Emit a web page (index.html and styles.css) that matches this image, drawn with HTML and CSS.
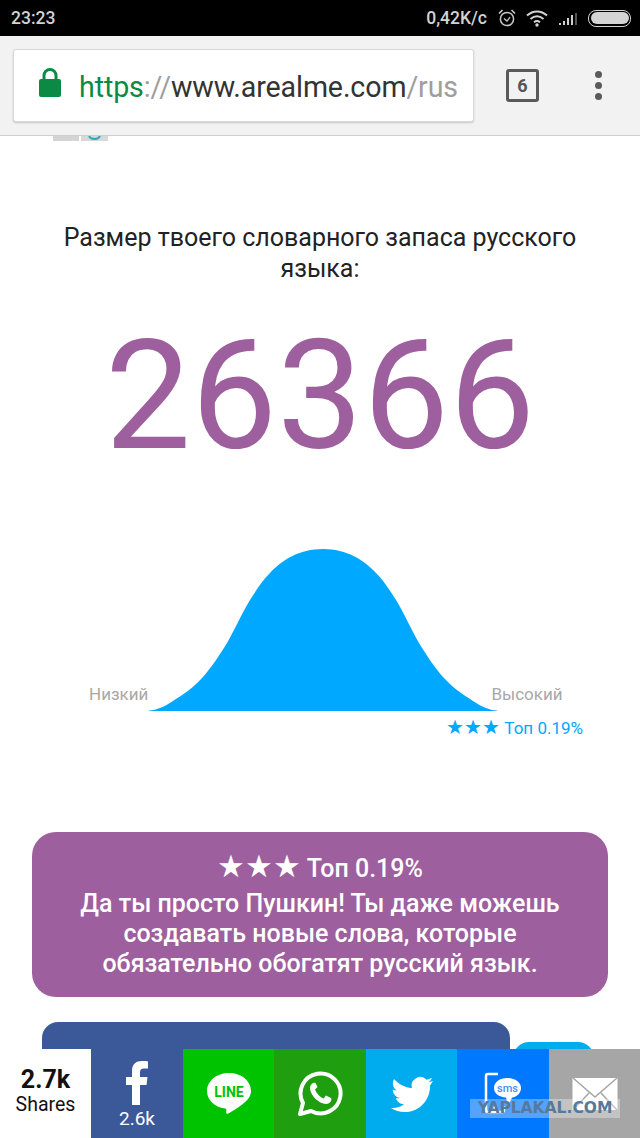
FILE: index.html
```html
<!DOCTYPE html>
<html lang="ru">
<head>
<meta charset="utf-8">
<title>Словарный запас</title>
<link rel="stylesheet" href="styles.css">
</head>
<body>
<div class="page">
  <header class="status">
    <span class="time">23:23</span>
    <div class="status-right">
      <span class="speed">0,42K/c</span>
      <svg class="ic-alarm" width="20" height="20" viewBox="0 0 20 20"><circle cx="10" cy="11" r="6.6" fill="none" stroke="#c9c9c9" stroke-width="1.5"/><path d="M7 10.5l3 2.6 3-4" fill="none" stroke="#c9c9c9" stroke-width="1.3"/><path d="M2 5.5L5.5 2M18 5.5L14.5 2" stroke="#c9c9c9" stroke-width="1.7"/></svg>
      <svg class="ic-wifi" width="24" height="18" viewBox="0 0 24 18"><path d="M2 6.5C8 1 16 1 22 6.5M5.5 10c4-3.400 9-3.400 13 0M9 13.200c2-1.500 4-1.500 6 0" fill="none" stroke="#d4d4d4" stroke-width="2"/><circle cx="12" cy="16" r="1.700" fill="#d4d4d4"/></svg>
      <svg class="ic-signal" width="20" height="14" viewBox="0 0 20 14"><path d="M1 11h2v2H1zM5 9h2v4H5zM9 6h2v7H9zM13 3h2v10h-2z" fill="#cfcfcf"/><path d="M17 1h2v12h-2z" fill="#555"/></svg>
      <div class="battery"><div class="battery-fill"></div></div>
    </div>
  </header>

  <div class="toolbar">
    <div class="urlbox">
      <svg class="lock" width="22" height="30" viewBox="0 0 22 30"><rect x="0" y="11" width="22" height="18" rx="2" fill="#0b8a43"/><path d="M5 12V7.500a6 6 0 0 1 12 0V12" fill="none" stroke="#0b8a43" stroke-width="3"/></svg>
      <span class="url"><span class="u-green">https</span><span class="u-gray">://</span><span class="u-dark">www.arealme.com</span><span class="u-gray">/rus</span></span>
    </div>
    <div class="tabs">6</div>
    <div class="dots"><i></i><i></i><i></i></div>
  </div>

  <main class="content">
    <div class="thumbs">
      <span class="thumb"></span>
      <svg class="thumb-teal" width="27" height="5" viewBox="0 0 27 5"><rect width="27" height="5" fill="#d8d8d8"/><path d="M8 0c1.500 4 9.500 4 11 0" fill="none" stroke="#2fa6b5" stroke-width="2"/></svg>
    </div>
    <h1 class="title">Размер твоего словарного запаса русского языка:</h1>
    <div class="score">26366</div>
    <div class="chart">
      <span class="lbl">Низкий</span>
      <svg class="curve" width="348" height="163" viewBox="0 0 348 163"><path d="M0 161.500C8 161 15 158 24 152C35 145 45 138 54 128C64 116 70 107 78 94C86 80 92 66 101 51C108 40 113 32 121 24C133 11 150 0 174 0C198 0 215 11 227 24C235 32 240 40 247 51C256 66 262 80 270 94C278 107 284 116 294 128C303 138 313 145 324 152C333 158 340 161 348 161.500L348 162L0 162Z" fill="#00a8ff"/></svg>
      <span class="lbl lbl-high">Высокий</span>
    </div>
    <div class="rank"><span class="rank-stars">★★★</span> Топ 0.19%</div>
    <section class="card">
      <div class="card-top"><span class="card-stars">★★★</span> Топ 0.19%</div>
      <div>Да ты просто Пушкин! Ты даже можешь создавать новые слова, которые обязательно обогатят русский язык.</div>
    </section>
    <div class="buttons">
      <div class="btn-fb"></div>
      <div class="btn-tw"></div>
    </div>
  </main>

  <footer class="sharebar">
    <div class="total"><b>2.7k</b><span>Shares</span></div>
    <div class="sh sh-fb">
      <svg width="24" height="44" viewBox="0 0 24 44"><path d="M7 44V24H1v-8h6v-6C7 3 11 0 17 0c3 0 5 .2 6 .4v7h-4c-3 0-4 1.400-4 4V16h7.500l-1 8H15v20z" fill="#fff"/></svg>
      <span class="sh-count">2.6k</span>
    </div>
    <div class="sh sh-line">
      <svg width="46" height="44" viewBox="0 0 46 44"><path d="M23 1C10.500 1 1 9 1 19c0 9 7.500 16 18 17.500 1.500.3 1.500 1 1.200 3-.2 1.500 0 3 2 2 3-1.500 14-8 19-13.500C44 25 45 22 45 19 45 9 35.500 1 23 1z" fill="#fff"/><text x="23" y="25" class="line-txt">LINE</text></svg>
    </div>
    <div class="sh sh-wa">
      <svg width="46" height="46" viewBox="0 0 46 46"><path d="M3 43l3-11A20 20 0 1 1 14 40z" fill="none" stroke="#fff" stroke-width="4" stroke-linejoin="round"/><path d="M16 12c-2 1-3 3-3 5 0 7 9 16 16 16 2 0 4-1 5-3 .6-1.500 .5-2.500 0-3l-5-2.500-2.500 3c-3-1-7-5-8.500-9l2.500-2.500L18.500 12c-.5-.5-1.500-.5-2.500 0z" fill="#fff"/></svg>
    </div>
    <div class="sh sh-tw">
      <svg width="44" height="36" viewBox="0 0 44 36"><path d="M43 5c-1.600.7-3 1.100-4.800 1.300 1.700-1 3-2.600 3.600-4.600-1.600 1-3.400 1.600-5.300 2A8.600 8.600 0 0 0 22 12c-7.200-.4-13.600-3.800-18-9-2.200 4-1.200 8.700 2.600 11.500-1.400 0-2.700-.4-3.800-1 0 4.200 3 7.700 7 8.500-1.300.4-2.600.4-3.900.2 1.100 3.400 4.300 5.900 8 6C10.500 31 6 32.400 1 32c4 2.600 8.700 4 13.700 4 16.500 0 25.800-14 25.300-26.500C41 8 42.200 6.700 43 5z" fill="#fff"/></svg>
    </div>
    <div class="sh sh-sms">
      <svg width="38" height="44" viewBox="0 0 38 44"><path d="M14 2H4a2 2 0 0 0-2 2v34a2 2 0 0 0 2 2h14a2 2 0 0 0 2-2v-4" fill="none" stroke="#fff" stroke-width="2.500"/><circle cx="11" cy="36" r="1.700" fill="#fff"/><path d="M23 6c8 0 14 4 14 10 0 5-4 9-9 9.500L24 34l-2-8.500C15 25 10 21.500 10 16c0-6 6-10 13-10z" fill="#fff"/><text x="23.500" y="20" class="sms-txt">sms</text></svg>
    </div>
    <div class="sh sh-mail">
      <svg width="46" height="34" viewBox="0 0 46 34"><rect width="45" height="32" x="0.500" y="1" fill="#fff"/><path d="M1 1l22 19L45 1M1 33l16-17M45 33L29 16" fill="none" stroke="#a6a6a6" stroke-width="1.500"/></svg>
    </div>
  </footer>
  <div class="watermark">YAPLAKAL.COM</div>
</div>
</body>
</html>
```

FILE: styles.css
```css
* { box-sizing: border-box; }
html, body { margin: 0; padding: 0; }
body { background: #fff; font-family: Roboto, "Liberation Sans", sans-serif; }
.page { position: relative; width: 640px; height: 1138px; overflow: hidden; display: flex; flex-direction: column; background: #fff; }

.status { height: 36px; flex: none; background: #000; display: flex; align-items: center; justify-content: space-between; padding: 0 9px 0 11px; color: #d2d2d2; font-size: 17.500px; font-weight: 500; }
.status-right { display: flex; align-items: center; }
.speed { margin-right: 10px; }
.ic-alarm { margin-right: 8px; margin-top: -1px; }
.ic-wifi { margin-right: 9px; }
.ic-signal { margin-right: 10px; margin-top: 2px; }
.battery { width: 43px; height: 17px; border: 1.500px solid #d4d4d4; border-radius: 8px; padding: 1.500px; }
.battery-fill { height: 100%; background: #d4d4d4; border-radius: 6px; }

.toolbar { height: 100px; flex: none; background: #f2f2f2; border-bottom: 1px solid #cfcfcf; display: flex; align-items: center; padding: 0 0 0 13px; }
.urlbox { width: 461px; height: 73px; margin-top: -1px; background: #fff; border: 1px solid #d8d8d8; border-radius: 3px; box-shadow: 0 1px 2px rgba(0,0,0,.18); display: flex; align-items: center; padding-left: 25px; }
.lock { flex: none; margin-right: 18px; margin-top: -4px; }
.url { font-size: 28.600px; white-space: nowrap; letter-spacing: -.1px; padding-top: 3px; }
.u-green { color: #0b8a43; }
.u-gray { color: #9e9e9e; }
.u-dark { color: #333; }
.tabs { width: 33px; height: 33px; margin-left: 32px; margin-top: -1px; border: 3px solid #5a5a5a; border-radius: 3px; color: #555; font-size: 18px; font-weight: 700; display: flex; align-items: center; justify-content: center; }
.dots { margin-left: 56px; display: flex; flex-direction: column; gap: 4px; margin-top: -1px; }
.dots i { display: block; width: 7px; height: 7px; border-radius: 50%; background: #5a5a5a; }

.content { flex: 1; min-height: 0; display: flex; flex-direction: column; align-items: center; }
.thumbs { align-self: flex-start; display: flex; gap: 2px; margin-left: 53px; height: 5px; }
.thumb { width: 26px; height: 5px; background: #d4d4d4; }
.thumb-teal { display: block; }
.title { margin: 81px 0 0; width: 540px; font-size: 25px; font-weight: 400; line-height: 31px; text-align: center; color: #222; }
.score { margin-top: 24px; font-size: 153px; font-weight: 400; line-height: 176px; color: #9e5f9e; text-align: center; }
.chart { margin-top: 65px; align-self: flex-start; margin-left: 89px; display: flex; align-items: flex-end; gap: 1px; }
.lbl { flex: none; color: #a8a8a8; font-size: 17px; line-height: 20px; margin-bottom: 8px; }
.lbl-high { margin-left: -7px; }
.curve { display: block; flex: none; }
.rank { align-self: flex-end; margin: 6px 57px 0 0; color: #00a8ff; font-size: 17px; line-height: 20px; }
.rank-stars { font-size: 19.500px; line-height: 0; }
.card { margin-top: 94px; width: 576px; height: 165px; padding: 22px 40px 0; background: #9e5f9e; border-radius: 24px; color: #fff; font-size: 25px; font-weight: 500; line-height: 30px; text-align: center; }
.card-top { margin-bottom: 5px; }
.card-stars { font-size: 31px; line-height: 0; }
.buttons { align-self: flex-start; display: flex; align-items: flex-start; margin: 25px 0 0 42px; gap: 3px; }
.btn-fb { flex: none; width: 468px; height: 40px; background: #3b5998; border-radius: 16px 16px 0 0; }
.btn-tw { flex: none; width: 81px; height: 20px; margin-top: 20px; background: #00aced; border-radius: 16px 16px 0 0; }

.sharebar { position: absolute; left: 0; bottom: 0; width: 640px; height: 89px; display: grid; grid-template-columns: 91px 92px 91px 92px 91px 92px 91px; background: #fff; }
.total { display: flex; flex-direction: column; align-items: center; padding-top: 17px; color: #111; }
.total b { font-size: 25px; line-height: 27px; font-weight: 700; }
.total span { font-size: 19.500px; line-height: 24px; }
.sh { display: flex; flex-direction: column; align-items: center; justify-content: center; color: #fff; }
.sh-fb { background: #3b5998; justify-content: flex-start; padding-top: 12px; }
.sh-count { font-size: 19px; line-height: 22px; margin-top: 3px; }
.sh-line { background: #00c300; }
.sh-wa { background: #1f9e10; }
.sh-tw { background: #00aced; }
.sh-sms { background: #0078ff; }
.sh-mail { background: #a6a6a6; }
.line-txt { font-size: 14px; font-weight: 700; fill: #00c300; text-anchor: middle; font-family: Roboto, sans-serif; }
.sms-txt { font-size: 11px; font-weight: 500; fill: #3d8ff0; text-anchor: middle; font-family: Roboto, sans-serif; }

.watermark { position: absolute; left: 470px; top: 1099px; width: 150px; height: 19px; background: rgba(255,255,255,.33); color: #56799c; font-family: "DejaVu Sans", sans-serif; font-size: 15.500px; font-weight: 700; line-height: 19px; text-align: center; }
```
